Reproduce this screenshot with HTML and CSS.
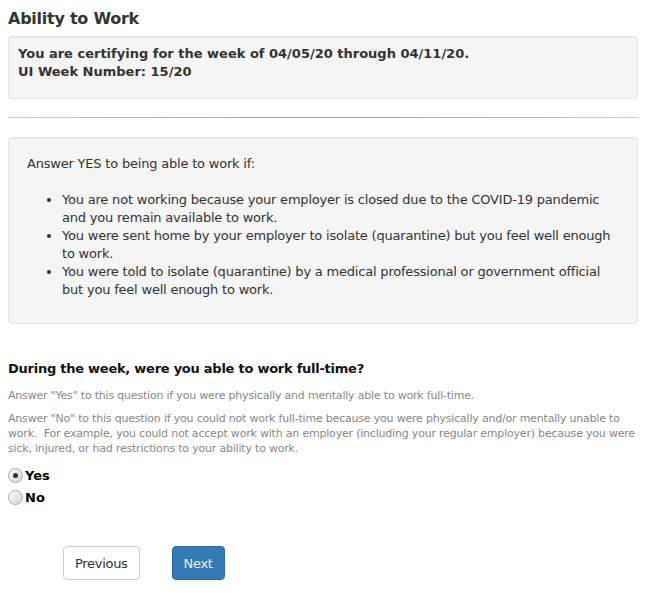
FILE: index.html
```html
<!DOCTYPE html>
<html lang="en">
<head>
<meta charset="utf-8">
<title>Ability to Work</title>
<link rel="stylesheet" href="styles.css">
</head>
<body>
<h1 class="title">Ability to Work</h1>
<div class="well well-sm">
  <p class="cert-line">You are certifying for the week of 04/05/20 through 04/11/20.</p>
  <p class="cert-line">UI Week Number: 15/20</p>
</div>
<div class="divider"></div>
<div class="well well-info">
  <p class="intro">Answer YES to being able to work if:</p>
  <ul class="reasons">
    <li>You are not working because your employer is closed due to the COVID-19 pandemic and you remain available to work.</li>
    <li>You were sent home by your employer to isolate (quarantine) but you feel well enough to work.</li>
    <li>You were told to isolate (quarantine) by a medical professional or government official but you feel well enough to work.</li>
  </ul>
</div>
<div class="question">
  <h2 class="question-title">During the week, were you able to work full-time?</h2>
  <p class="hint">Answer "Yes" to this question if you were physically and mentally able to work full-time.</p>
  <p class="hint">Answer "No" to this question if you could not work full-time because you were physically and/or mentally unable to work.&nbsp; For example, you could not accept work with an employer (including your regular employer) because you were sick, injured, or had restrictions to your ability to work.</p>
  <div class="choices">
    <label class="choice"><input type="radio" name="able" class="radio" checked><span>Yes</span></label>
    <label class="choice"><input type="radio" name="able" class="radio"><span>No</span></label>
  </div>
</div>
<div class="actions">
  <button type="button" class="btn btn-default">Previous</button>
  <button type="button" class="btn btn-primary">Next</button>
</div>
</body>
</html>
```
FILE: styles.css
```css
html, body {
  background: #ffffff;
}
body {
  margin: 8px;
  font-family: "DejaVu Sans", Verdana, sans-serif;
  font-size: 13px;
  color: #333333;
}
.title {
  margin: 0 0 6px;
  font-size: 16px;
  line-height: 22px;
  font-weight: bold;
  color: #333333;
  letter-spacing: -0.25px;
}
.well {
  background: #f5f5f5;
  border: 1px solid #e3e3e3;
  border-radius: 4px;
  box-shadow: inset 0 1px 1px rgba(0, 0, 0, 0.05);
}
.well-sm {
  padding: 8px 9px 17px;
  border-radius: 3px;
}
.cert-line {
  margin: 0;
  font-weight: bold;
  line-height: 18px;
  font-size: 13px;
  letter-spacing: 0;
}
.divider {
  height: 1px;
  margin: 18px 0 19px;
  background: linear-gradient(to right, #c8cdd2, #6ea3da 50%, #c8cdd2);
}
.well-info {
  padding: 17px 18px 24px;
}
.intro {
  margin: 0 0 18px;
  line-height: 18px;
  letter-spacing: -0.2px;
}
.reasons {
  margin: 0;
  padding-left: 35px;
  line-height: 18px;
  letter-spacing: -0.2px;
}
.question {
  margin-top: 36px;
}
.question-title {
  margin: 0 0 10px;
  font-size: 13px;
  line-height: 18px;
  font-weight: bold;
  color: #111111;
  letter-spacing: -0.25px;
}
.hint {
  margin: 0 0 8px;
  font-size: 11px;
  line-height: 15px;
  color: #888888;
  letter-spacing: -0.2px;
}
.choices {
  display: flex;
  flex-direction: column;
}
.choice {
  display: flex;
  align-items: center;
  height: 22px;
  font-weight: bold;
  color: #000000;
  font-size: 13px;
}
.radio {
  appearance: none;
  -webkit-appearance: none;
  width: 15px;
  height: 15px;
  margin: 0 2px 0 0;
  border: 1px solid #a8a8a8;
  border-radius: 50%;
  background: linear-gradient(135deg, #fbfbfb, #d4d4d4);
  display: flex;
  align-items: center;
  justify-content: center;
}
.radio:checked::after {
  content: "";
  width: 5px;
  height: 5px;
  border-radius: 50%;
  background: #333333;
}
.actions {
  display: flex;
  gap: 32px;
  margin-top: 38px;
  padding-left: 55px;
}
.btn {
  height: 34px;
  padding: 0 11px;
  font-family: "DejaVu Sans", Verdana, sans-serif;
  font-size: 13px;
  border-radius: 4px;
  border: 1px solid transparent;
  letter-spacing: -0.3px;
}
.btn-default {
  background: #ffffff;
  border-color: #cccccc;
  color: #333333;
}
.btn-primary {
  background: #337ab7;
  border-color: #2e6da4;
  color: #f0f0f0;
}
```
